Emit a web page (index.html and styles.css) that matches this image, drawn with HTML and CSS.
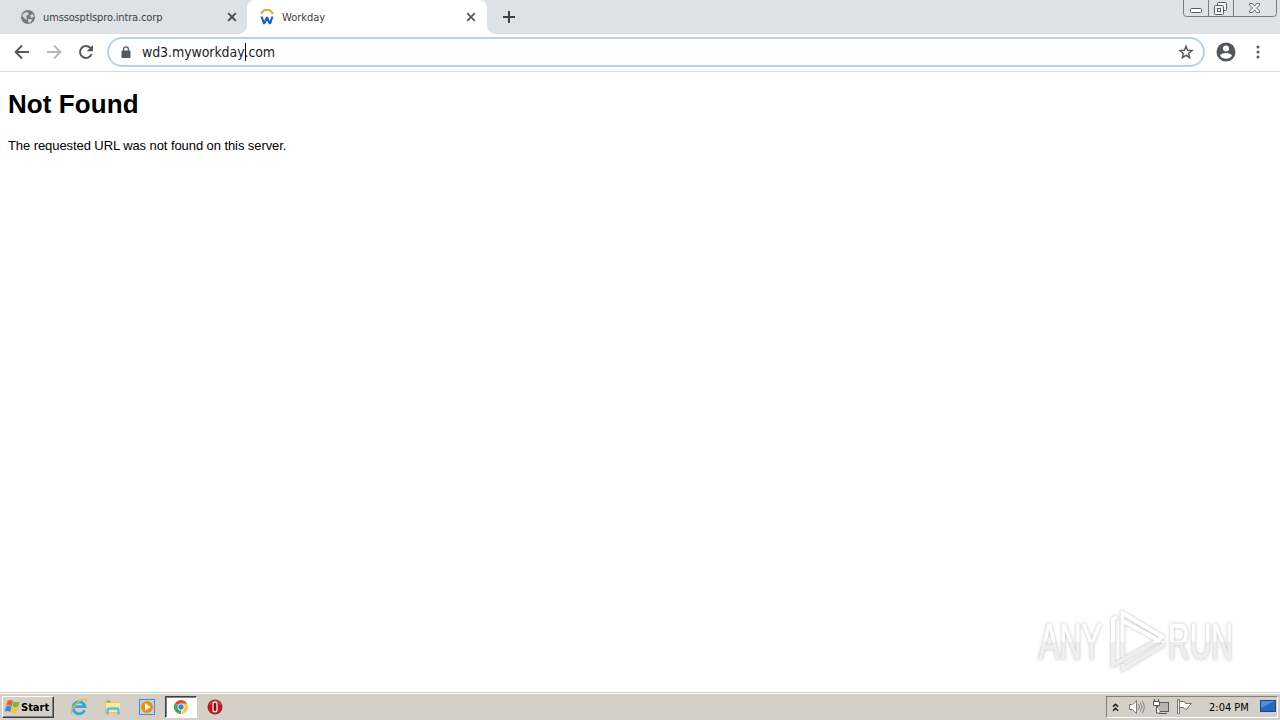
FILE: index.html
```html
<!DOCTYPE html>
<html lang="en">
<head>
  <meta charset="UTF-8">
  <title>Workday</title>
  <link rel="stylesheet" href="styles.css">
</head>
<body>
  <div class="tabstrip">
    <div class="tab">
      <svg class="favicon" width="14" height="14" viewBox="0 0 14 14">
        <circle cx="7" cy="7" r="7" fill="#75787b"/>
        <path d="M2 4l3-2 3 1-1 2-2 1 1 2-1 2-2-2-2-2zM9 5l3-1 1 3-3 1zM7 9l3 0 1 1-2 3-2-1z" fill="#d2d5da"/>
      </svg>
      <span class="tab-title first-title">umssosptlspro.intra.corp</span>
      <svg class="tab-close" width="10" height="10" viewBox="0 0 10 10"><path d="M1.2 1.2l7.6 7.6M8.8 1.2L1.2 8.8" stroke="#45494d" stroke-width="1.9"/></svg>
    </div>
    <div class="tab active">
      <svg class="favicon" width="14" height="17" viewBox="0 0 14 17">
        <path d="M1.300 5C3-.7 11-.7 12.700 5" fill="none" stroke="#eea236" stroke-width="2"/>
        <path d="M1.500 7.500l2.600 7.400L7 8.300l2.900 6.600 2.600-7.400" fill="none" stroke="#1f62b5" stroke-width="2.200" stroke-linejoin="bevel"/>
      </svg>
      <span class="tab-title">Workday</span>
      <svg class="tab-close" width="10" height="10" viewBox="0 0 10 10"><path d="M1.2 1.2l7.6 7.6M8.8 1.2L1.2 8.8" stroke="#55595d" stroke-width="1.8"/></svg>
    </div>
    <svg class="new-tab" width="12" height="12" viewBox="0 0 12 12"><path d="M6 0v12M0 6h12" stroke="#3c4043" stroke-width="2"/></svg>
    <svg class="window-buttons" width="95" height="17" viewBox="0 0 95 17">
      <g fill="none" stroke="#777b82">
        <path d="M.5 0v13.5q0 3 3 3h87q3 0 3-3V0M25.500 0v16M50.500 0v16"/>
        <rect x="7.500" y="8.500" width="11" height="4" rx="1" fill="#fff" stroke="#555a63"/>
        <g stroke="#555a63" fill="#f3f5f8">
          <rect x="34.500" y="2.500" width="9" height="8" rx="1"/>
          <rect x="31.500" y="5.500" width="9" height="9" rx="1"/>
          <rect x="34.500" y="8.500" width="3" height="3"/>
        </g>
        <path d="M66.500 3.500h3l2 2.500 2-2.500h3v1.500l-3 3 3 3v1.500h-3l-2-2.500-2 2.500h-3V11l3-3-3-3z" fill="#f3f5f8" stroke="#666b73"/>
      </g>
    </svg>
  </div>

  <div class="toolbar">
    <svg class="back" width="16" height="16" viewBox="0 0 16 16"><path d="M15 8H2M8 1.500L1.600 8 8 14.500" fill="none" stroke="#55595d" stroke-width="1.900"/></svg>
    <svg class="forward" width="16" height="16" viewBox="0 0 16 16"><path d="M1 8h13M8 1.500L14.400 8 8 14.500" fill="none" stroke="#b4b6b9" stroke-width="1.900"/></svg>
    <svg class="reload" width="16" height="16" viewBox="0 0 16 16">
      <path d="M13.600 10.200A6 6 0 1 1 12.300 3.800L13.500 5" fill="none" stroke="#55595d" stroke-width="2"/>
      <path d="M15 1v6.300H8.700z" fill="#55595d"/>
    </svg>
    <div class="omnibox">
      <svg width="10" height="13" viewBox="0 0 10 13">
        <rect x=".5" y="4.500" width="9" height="7.500" rx="1" fill="#55585c"/>
        <path d="M2.600 5V3.200a2.400 2.400 0 0 1 4.800 0V5" fill="none" stroke="#55585c" stroke-width="1.300"/>
      </svg>
      <span class="url"><span class="url-host">wd3.myworkday</span><i class="caret"></i><span class="url-end">.com</span></span>
      <svg class="star" width="16" height="16" viewBox="0 0 16 16"><path d="M8 2.200l1.600 4.100 4.400.3-3.400 2.800 1.100 4.300L8 11.300l-3.700 2.400 1.100-4.300L2 6.600l4.400-.3z" fill="none" stroke="#55595d" stroke-width="1.400"/></svg>
    </div>
    <svg class="profile" width="20" height="20" viewBox="0 0 20 20">
      <circle cx="10" cy="10" r="9.500" fill="#53575b"/>
      <circle cx="10" cy="6.500" r="3" fill="#fff"/>
      <path d="M4 13.700c1.500-3.600 10.500-3.600 12 0-2.600 4-9.400 4-12 0z" fill="#fff"/>
    </svg>
    <svg class="menu" width="4" height="14" viewBox="0 0 4 14"><g fill="#55595d"><circle cx="2" cy="2" r="1.500"/><circle cx="2" cy="7" r="1.500"/><circle cx="2" cy="12" r="1.500"/></g></svg>
  </div>

  <div class="page">
    <h1>Not Found</h1>
    <p>The requested URL was not found on this server.</p>
    <svg class="watermark" width="249" height="80" viewBox="0 0 249 80">
      <defs>
        <linearGradient id="fade" gradientUnits="userSpaceOnUse" x1="0" y1="0" x2="0" y2="80">
          <stop offset=".48" stop-color="#fff"/>
          <stop offset=".49" stop-color="#efefef"/>
        </linearGradient>
      </defs>
      <g class="wm-text">
        <text x="8" y="56" textLength="63" lengthAdjust="spacingAndGlyphs">ANY</text>
        <text x="137" y="56" textLength="65" lengthAdjust="spacingAndGlyphs">RUN</text>
      </g>
      <g class="wm-play" fill="none" stroke="url(#fade)" stroke-width="4">
        <path d="M86 14l-4 2v46l46-25"/>
        <path d="M91.500 54V10L131 33.500l-3 4-35-19"/>
        <path d="M132 38v4L92 66v-5"/>
      </g>
    </svg>
  </div>

  <div class="taskbar">
    <div class="start">
      <svg width="17" height="16" viewBox="0 0 17 16">
        <path d="M3.500 2q3-1.800 5.500 0L7.800 7q-3-1.600-5.600 0z" fill="#e8622b"/>
        <path d="M9.600 2.400q3 1.500 6 0L14.300 7.500q-3 1.500-5.900 0z" fill="#79b440"/>
        <path d="M1.900 7.800q3-1.600 5.700 0L6.300 13q-3-1.800-5.700 0z" fill="#398ad4"/>
        <path d="M8.200 8.200q3 1.500 5.900 0L12.800 13.500q-3 1.600-6 0z" fill="#f7c52e"/>
      </svg>
      <span>Start</span>
    </div>
    <div class="quick">
      <svg width="18" height="18" viewBox="0 0 18 18">
        <path d="M14.600 12.200A6 6 0 1 1 15 8.700H5" fill="none" stroke="#38a5dd" stroke-width="2.800"/>
        <path d="M2.300 16C-1 14 5 4.500 12 1.700c4-1.600 5 0 3.700 3" fill="none" stroke="#e6b936" stroke-width="1.300"/>
      </svg>
      <svg width="18" height="18" viewBox="0 0 18 18">
        <path d="M1 2h5l1 2h9v11H1z" fill="#e5c55e"/>
        <path d="M2 5h14v9H2z" fill="#faeaa0"/>
        <path d="M3.500 16.500v-4q0-2 2-2h7q2 0 2 2v4" fill="none" stroke="#69b7df" stroke-width="2.400"/>
        <path d="M3 3.500h3" stroke="#5dae63" stroke-width="1.500"/>
      </svg>
      <svg width="18" height="18" viewBox="0 0 18 18">
        <rect x="1.500" y="1.500" width="15" height="15" fill="#b9d8f0" stroke="#5288c0"/>
        <circle cx="9" cy="9" r="6" fill="#f18b16"/><path d="M7 5.300v7.400L12.500 9z" fill="#fff"/>
      </svg>
      <div class="pressed">
        <svg width="16" height="16" viewBox="0 0 16 16">
          <path d="M8 8L1.900 4.500A7 7 0 0 1 14.100 4.500z" fill="#dc4a3d"/>
          <path d="M8 8v7A7 7 0 0 1 1.900 4.500z" fill="#42a35a"/>
          <path d="M8 4.500h6.100A7 7 0 0 1 8 15l3-5z" fill="#f6cb42"/>
          <circle cx="8" cy="8" r="3.500" fill="#fff"/><circle cx="8" cy="8" r="2.700" fill="#447fe2"/>
        </svg>
      </div>
      <svg width="16" height="16" viewBox="0 0 16 16">
        <circle cx="8" cy="8" r="7.500" fill="#b51c20"/>
        <path d="M2.500 5.500Q8-1.500 13.500 5.500" fill="none" stroke="#d76967"/>
        <rect x="6" y="3.300" width="4" height="9.400" rx="1.800" fill="#8b0d13" stroke="#f5dede" stroke-width="1.400"/>
      </svg>
    </div>
    <div class="tray">
      <svg class="chevrons" width="7" height="9" viewBox="0 0 7 9"><path d="M1 3.800l2.500-2.500L6 3.800M1 7.800l2.500-2.500L6 7.800" fill="none" stroke="#111" stroke-width="1.400"/></svg>
      <svg class="speaker" width="17" height="16" viewBox="0 0 17 16">
        <path d="M1.500 5.500h3l4-4v13l-4-4h-3z" fill="#fff" stroke="#777"/>
        <path d="M10.500 5q2 3 0 6M12.500 3.500q3 4.500 0 9M14.500 2q3.500 6 0 12" fill="none" stroke="#888"/>
      </svg>
      <svg class="network" width="16" height="16" viewBox="0 0 16 16">
        <rect x="4.500" y="3.500" width="11" height="9" fill="#b7b5b0" stroke="#5b5b5b"/>
        <path d="M6 14.500h8" stroke="#555"/>
        <path d="M1.500 0v2M5.500 0v2M.5 2.500h6v4h-6zM3.500 7v7h4" fill="#fff" stroke="#555"/>
      </svg>
      <svg class="flag" width="17" height="16" viewBox="0 0 17 16"><path d="M1.500.500h2v14h-2z" fill="#eee" stroke="#777"/><path d="M3.500 2.500h5l1 2h6l-3 3 -1 2.500h-3l-1-1.500h-4z" fill="#fff" stroke="#777"/></svg>
      <span class="clock">2:04 PM</span>
      <svg class="desktop" width="16" height="14" viewBox="0 0 16 14">
        <rect x=".5" y=".5" width="15" height="11" fill="#2468bd" stroke="#214778"/>
        <path d="M1 1h14L1 8z" fill="#4b91dc"/><path d="M4 13h9" stroke="#b8d0eb" stroke-width="2"/>
      </svg>
    </div>
  </div>
</body>
</html>
```
FILE: styles.css
```css
* {
  box-sizing: border-box;
}
body {
  margin: 0;
  height: 720px;
  display: flex;
  flex-direction: column;
  overflow: hidden;
  background: #fff;
  font-family: "DejaVu Sans Condensed", "DejaVu Sans", sans-serif;
  font-stretch: condensed;
}
svg {
  display: block;
  flex: none;
}

/* tabs */
.tabstrip {
  height: 34px;
  display: flex;
  background: #dee1e6;
}
.tab {
  width: 247px;
  height: 34px;
  display: flex;
  align-items: center;
  padding: 0 10px 0 21px;
  border-radius: 0 0 8px 0;
  background: #dee1e6;
}
.tab.active {
  position: relative;
  width: 240px;
  padding: 0 11px 0 13px;
  border-radius: 8px 8px 0 0;
  background: #fff;
}
.tab.active::before,
.tab.active::after {
  content: "";
  position: absolute;
  bottom: 0;
  width: 8px;
  height: 8px;
}
.tab.active::before {
  left: -8px;
  background: radial-gradient(circle at 0 0, #dee1e6 7.5px, #fff 8px);
}
.tab.active::after {
  right: -8px;
  background: radial-gradient(circle at 100% 0, #dee1e6 7.5px, #fff 8px);
}
.tab-title {
  flex: 1;
  margin-left: 9px;
  padding-top: 1px;
  font-size: 11px;
  line-height: 16px;
  color: #3c4043;
  white-space: nowrap;
}
.first-title {
  margin-left: 8px;
  letter-spacing: -0.14px;
}
.new-tab {
  margin: 11px 0 0 16px;
}
.active .tab-title {
  margin-left: 8px;
}
.window-buttons {
  margin: 0 2px 0 auto;
}

/* toolbar */
.toolbar {
  height: 38px;
  display: flex;
  align-items: center;
  padding: 0 19px 1px 14px;
  border-bottom: 1px solid #dadce0;
}
.forward {
  margin-left: 16px;
}
.reload {
  margin-left: 16px;
}
.omnibox {
  width: 1098px;
  height: 30px;
  display: flex;
  align-items: center;
  margin-left: 13px;
  padding: 0 9px 0 12px;
  border: 2px solid #b9d0ef;
  border-radius: 15px;
}
.url {
  flex: 1;
  display: flex;
  align-items: center;
  margin-left: 11px;
  font-size: 14px;
  letter-spacing: -0.09px;
  color: #202124;
}
.caret {
  width: 1px;
  height: 18px;
  margin-right: -1px;
  background: #000;
}
.profile {
  margin-left: 11px;
}
.menu {
  margin-left: 20px;
}

/* document */
.page {
  position: relative;
  flex: 1;
  padding: 0 8px;
  font-family: "Liberation Sans", Arial, sans-serif;
  color: #000;
}
h1 {
  margin: 17px 0 0;
  font-size: 26px;
  line-height: 30px;
  letter-spacing: 0.08px;
}
p {
  margin: 18px 0 0;
  font-size: 13px;
  line-height: 17px;
  letter-spacing: -0.08px;
}
.watermark {
  position: absolute;
  left: 1031px;
  top: 531px;
}
.wm-text {
  font: 50px "Liberation Sans", Arial, sans-serif;
  fill: url(#fade);
  stroke: url(#fade);
  stroke-width: 1;
  filter: drop-shadow(0 0 1.5px #bbb);
}
.wm-play {
  filter: drop-shadow(0 0 1.5px #bbb);
}

/* taskbar */
.taskbar {
  height: 28px;
  display: flex;
  align-items: center;
  padding: 1px 2px 0 2px;
  border-top: 1px solid #d4d0c8;
  background: #d4d0c8;
  box-shadow: inset 0 1px #fff;
}
.start {
  width: 52px;
  height: 22px;
  display: flex;
  align-items: center;
  padding-left: 1px;
  border: 1px solid #fff;
  border-right-color: #404040;
  border-bottom-color: #404040;
  box-shadow: inset -1px -1px #808080;
  font-size: 11px;
  font-weight: bold;
}
.quick {
  display: flex;
  align-items: center;
  gap: 16px;
  margin-left: 16px;
}
.pressed {
  width: 32px;
  height: 22px;
  display: flex;
  align-items: center;
  justify-content: center;
  margin: 0 -6px 0 -7px;
  border: 1px solid #404040;
  border-right-color: #fff;
  border-bottom-color: #fff;
  background: #fff;
  box-shadow: inset 1px 1px #808080;
}
.tray {
  width: 172px;
  height: 22px;
  display: flex;
  align-items: center;
  margin-left: auto;
  padding-left: 5px;
  border: 1px solid #808080;
  border-right-color: #fff;
  border-bottom-color: #fff;
}
.speaker {
  margin-left: 9px;
}
.network {
  margin-left: 8px;
}
.flag {
  margin-left: 7px;
}
.clock {
  width: 41px;
  margin: 0 10px 0 16px;
  font-size: 11px;
  white-space: nowrap;
}
```
